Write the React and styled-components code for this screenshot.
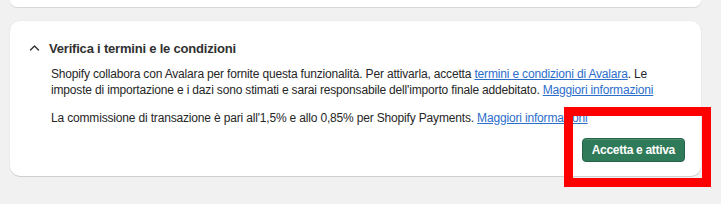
import styled, { createGlobalStyle } from 'styled-components';

const Global = createGlobalStyle`
  html, body {
    margin: 0;
    padding: 0;
    background: #f1f1f1;
  }
  body {
    font-family: "Liberation Sans", Arial, sans-serif;
    color: #303030;
  }
`;

const Page = styled.div`
  position: relative;
  width: 721px;
  height: 204px;
  padding: 0 20px 0 10px;
  box-sizing: border-box;
`;

const CardTail = styled.div`
  height: 7px;
  background: #fff;
  border-radius: 0 0 10px 10px;
  box-shadow: 0 1px 0 rgba(0, 0, 0, 0.1);
`;

const Card = styled.section`
  margin-top: 14px;
  background: #fff;
  border-radius: 10px;
  box-shadow: 0 1px 0 rgba(0, 0, 0, 0.12), 0 0 0 1px rgba(0, 0, 0, 0.02);
  padding: 18px 16px 14px 19px;
`;

const Header = styled.div`
  display: flex;
  align-items: center;
  gap: 9px;
  height: 18px;
`;

const Title = styled.h2`
  margin: 0;
  font-size: 13px;
  font-weight: 700;
  letter-spacing: -0.2px;
  color: #303030;
`;

const Body = styled.div`
  padding-left: 22px;
  margin-top: 9px;
`;

const Para = styled.p`
  margin: 0 0 ${p => p.$gap || 0}px;
  font-size: 12px;
  line-height: 16px;
  letter-spacing: -0.17px;
  color: #262626;
`;

const Link = styled.a`
  color: #2c6ecb;
  text-decoration: underline;
`;

const Footer = styled.div`
  display: flex;
  justify-content: flex-end;
  margin-top: 12px;
`;

const Button = styled.button`
  height: 24px;
  padding: 0 9px;
  border-radius: 4px;
  border: 1px solid #24654a;
  background: #2f7a58;
  color: #fff;
  font-family: "Liberation Sans", Arial, sans-serif;
  font-size: 12px;
  font-weight: 700;
  letter-spacing: -0.3px;
  box-shadow: inset 0 1px 0 rgba(255, 255, 255, 0.15);
`;

const Highlight = styled.div`
  position: absolute;
  left: 564px;
  top: 107px;
  width: 147px;
  height: 80px;
  box-sizing: border-box;
  border: 9px solid #ff0000;
  pointer-events: none;
`;

function Chevron() {
  return (
    <svg width="11" height="8" viewBox="0 0 11 8" fill="none">
      <polyline points="1.5,6 5.5,2 9.5,6" stroke="#303030" strokeWidth="1.4" strokeLinecap="round" strokeLinejoin="round" />
    </svg>
  );
}

export default function App() {
  return (
    <>
      <Global />
      <Page>
        <CardTail />
        <Card>
          <Header>
            <Chevron />
            <Title>Verifica i termini e le condizioni</Title>
          </Header>
          <Body>
            <Para $gap={12}>
              Shopify collabora con Avalara per fornite questa funzionalità. Per attivarla, accetta{' '}
              <Link>termini e condizioni di Avalara</Link>. Le imposte di importazione e i dazi sono
              stimati e sarai responsabile dell'importo finale addebitato. <Link>Maggiori informazioni</Link>
            </Para>
            <Para>
              La commissione di transazione è pari all'1,5% e allo 0,85% per Shopify Payments.{' '}
              <Link>Maggiori informazioni</Link>
            </Para>
          </Body>
          <Footer>
            <Button>Accetta e attiva</Button>
          </Footer>
        </Card>
        <Highlight />
      </Page>
    </>
  );
}
